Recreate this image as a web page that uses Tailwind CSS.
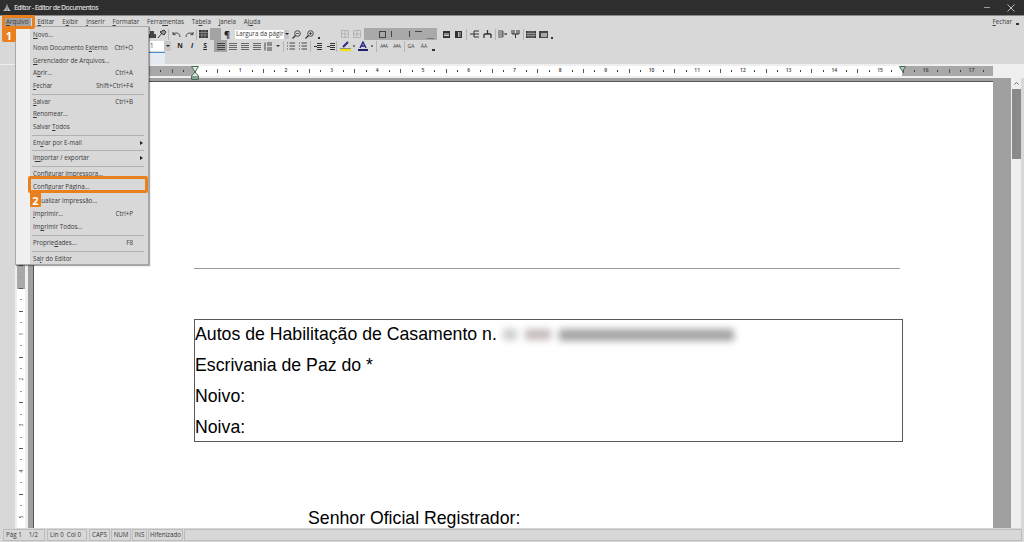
<!DOCTYPE html>
<html lang="pt-BR">
<head>
    <meta charset="UTF-8">
    <title>Editor - Editor de Documentos</title>
    <script src="https://cdn.jsdelivr.net/npm/@tailwindcss/browser@4"></script>
</head>
<body class="w-[1024px] h-[542px] overflow-hidden relative flex flex-col bg-[#d8d8d8] text-[#3a3a3a] font-['Open_Sans',sans-serif] text-[6.2px] leading-none">

    <!-- Title bar -->
    <header class="h-[15px] shrink-0 bg-[#2f2f2f] flex items-center text-[#d8d8d8] pl-[3px] relative">
        <svg class="w-[8px] h-[8px]" viewBox="0 0 8 8"><path d="M4 0 L6 5 L8 7 L0 7 L2 5 Z" fill="#bdbdbd"/><path d="M4 1V7" stroke="#555" stroke-width=".7"/></svg>
        <span class="ml-[3px] font-semibold text-[7px] tracking-[-0.6px]">Editor - Editor de Documentos</span>
        <div class="ml-auto flex items-center">
            <span class="w-[6px] h-px bg-[#9a9a9a] mr-[17px]"></span>
            <svg class="w-[8px] h-[8px] mr-[9px]" viewBox="0 0 8 8"><path d="M.5 .5L7.5 7.5M7.5 .5L.5 7.5" stroke="#cfcfcf" stroke-width=".9"/></svg>
        </div>
    </header>
    <div class="h-px shrink-0 bg-[#8a8a8a]"></div>

    <!-- Menu bar -->
    <nav class="h-[12px] shrink-0 flex items-center pl-[3px] gap-[7.8px]">
        <span class="h-[12px] flex items-center px-[3px] -mr-[1.8px] bg-[#a3a3a3]"><u>A</u>rquivo</span>
        <span><u>E</u>ditar</span>
        <span>E<u>x</u>ibir</span>
        <span><u>I</u>nserir</span>
        <span><u>F</u>ormatar</span>
        <span>Ferra<u>m</u>entas</span>
        <span>Ta<u>b</u>ela</span>
        <span><u>J</u>anela</span>
        <span>Aj<u>u</u>da</span>
        <span class="ml-auto mr-[12px] flex items-center"><u>F</u>echar</span>
        <span class="absolute right-[5px] top-[23px] w-[3px] h-[2px] bg-[#333]"></span>
    </nav>

    <!-- Toolbars -->
    <div class="h-[12px] shrink-0 flex items-center pl-[149px]">
        <svg class="w-[7px] h-[9px]" viewBox="0 0 7 9"><path d="M1 1h4v3h2v4H0V4h1z" fill="#444"/></svg>
        <svg class="w-[10px] h-[10px] ml-[1px]" viewBox="0 0 10 10"><path d="M1 9L5 4M3 3L7 1L9 3L7 6Z" stroke="#333" fill="#999" stroke-width="1"/></svg>
        <span class="w-px h-[11px] bg-[#b4b4b4] ml-[1px]"></span>
        <svg class="w-[9px] h-[7px] ml-[3px]" viewBox="0 0 9 7"><path d="M8 6C8 2 4 1 1 3M1 1V3.6H3.6" fill="none" stroke="#444" stroke-width="1"/></svg>
        <svg class="w-[9px] h-[7px] ml-[4px]" viewBox="0 0 9 7"><path d="M1 6C1 2 5 1 8 3M8 1V3.6H5.4" fill="none" stroke="#444" stroke-width="1"/></svg>
        <span class="w-px h-[11px] bg-[#b4b4b4] ml-[2px]"></span>
        <svg class="w-[9px] h-[8px] ml-[2px]" viewBox="0 0 9 8"><path d="M0 0h9v8H0z" fill="#3c3c3c"/><path d="M0 2.5h9M0 5h9M3 0v8M6 0v8" stroke="#aaa" stroke-width=".6"/></svg>
        <span class="w-[11px] h-[12px] bg-[#a3a3a3] ml-[2px]"></span>
        <span class="w-[12px] text-center text-[9px] font-bold text-[#222]">¶</span>
        <span class="w-[49px] h-[9px] bg-white ml-[2px] flex items-center pl-[1px] overflow-hidden whitespace-nowrap">Largura da págir</span>
        <span class="w-[5px] h-[9px] bg-[#c6c6c6] flex items-center justify-center"><i class="border-x-[2px] border-t-[2px] border-x-transparent border-t-[#222]"></i></span>
        <svg class="w-[9px] h-[9px] ml-[3px]" viewBox="0 0 9 9"><circle cx="5.5" cy="3.5" r="2.8" fill="none" stroke="#444"/><path d="M3.5 5.5L.5 8.5" stroke="#333" stroke-width="1.3"/><path d="M4 3.5h3" stroke="#444" stroke-width=".8"/></svg>
        <svg class="w-[9px] h-[9px] ml-[4px]" viewBox="0 0 9 9"><circle cx="5.5" cy="3.5" r="2.8" fill="none" stroke="#444"/><path d="M3.5 5.5L.5 8.5" stroke="#333" stroke-width="1.3"/><path d="M4 3.5h3M5.5 2v3" stroke="#444" stroke-width=".8"/></svg>
        <span class="w-[2px] h-[2px] bg-[#333] ml-[4px] mt-[7px]"></span>
        <svg class="w-[8px] h-[8px] ml-[21px]" viewBox="0 0 8 8"><path d="M.5.5h7v7h-7zM4 .5v7M.5 4h7" fill="none" stroke="#b4b4b4"/></svg>
        <svg class="w-[8px] h-[8px] ml-[4px]" viewBox="0 0 8 8"><path d="M.5.5h7v7h-7zM4 .5v7M.5 4h7" fill="none" stroke="#b4b4b4"/></svg>
        <!-- Border buttons, active group -->
        <div class="w-[73px] h-[12px] bg-[#a9a9a9] ml-[3px] flex items-center">
            <span class="w-[7px] h-[7px] border border-[#444] ml-[15px]"></span>
            <span class="w-px h-[6px] bg-[#444] ml-[5px]"></span>
            <span class="w-px h-[6px] bg-[#444] ml-[17px]"></span>
            <span class="w-[7px] h-px bg-[#444] ml-[5px] mb-[6px]"></span>
            <span class="w-[7px] h-px bg-[#777] ml-[5px] mt-[8px]"></span>
        </div>
        <svg class="w-[7px] h-[7px] ml-[6px]" viewBox="0 0 7 7"><path d="M0 0h7v7H0z" fill="#333"/><path d="M1 3h5M1 4.6h5" stroke="#ddd"/></svg>
        <svg class="w-[7px] h-[7px] ml-[5px]" viewBox="0 0 7 7"><path d="M0 0h7v7H0z" fill="#333"/><path d="M3.5 1v5M5 1v5" stroke="#ddd" stroke-width=".8"/></svg>
        <span class="w-px h-[11px] bg-[#b4b4b4] ml-[4px]"></span>
        <svg class="w-[9px] h-[8px] ml-[3px]" viewBox="0 0 9 8"><path d="M0 4h4M4 1h5M4 4h5M4 7h5M4 1v6" stroke="#333" fill="none"/></svg>
        <svg class="w-[9px] h-[8px] ml-[4px]" viewBox="0 0 9 8"><path d="M4.5 0v4M1 4h7M1 4v4M8 4v4" stroke="#333" fill="none" stroke-width="1.3"/></svg>
        <span class="w-px h-[11px] bg-[#b4b4b4] ml-[3px]"></span>
        <svg class="w-[9px] h-[8px] ml-[2px]" viewBox="0 0 9 8"><path d="M0 1h5v6H0M0 3h5M0 5h5M6 4h3M8 3v2" stroke="#333" fill="none" stroke-width=".8"/></svg>
        <svg class="w-[9px] h-[8px] ml-[4px]" viewBox="0 0 9 8"><path d="M1 0v4h7V0M3 0v4M6 0v4M4.5 4v4" stroke="#333" fill="none"/></svg>
        <span class="w-px h-[11px] bg-[#b4b4b4] ml-[3px]"></span>
        <svg class="w-[10px] h-[7px] ml-[2px]" viewBox="0 0 10 7"><path d="M0 0h10v7H0z" fill="#333"/><path d="M0 2.5h10M0 4.5h10M2 0v7M4 0v7M6 0v7M8 0v7" stroke="#ccc" stroke-width=".5"/></svg>
        <svg class="w-[9px] h-[7px] ml-[3px]" viewBox="0 0 9 7"><path d="M0 0h9v7H0z" fill="#444"/><path d="M2 2h6v4H2z" fill="#a8a8a8"/></svg>
        <span class="w-[2px] h-[2px] bg-[#333] ml-[3px] mt-[7px]"></span>
    </div>

    <div class="h-[12px] shrink-0 flex items-center pl-[149px]">
        <span class="w-[15px] h-[10px] bg-white flex items-center pl-px">1</span>
        <span class="w-[7px] h-[10px] bg-[#c6c6c6] flex items-center justify-center"><i class="border-x-[2px] border-t-[2px] border-x-transparent border-t-[#222]"></i></span>
        <span class="w-[12px] ml-[3px] text-center font-bold text-[6.8px] text-[#222]">N</span>
        <span class="w-[12px] text-center italic font-bold text-[6.8px] text-[#222]">I</span>
        <span class="w-[12px] ml-[1px] text-center underline font-bold text-[6.8px] text-[#222]">S</span>
        <span class="w-[13px] h-[12px] bg-[#a3a3a3] ml-[3px] flex items-center justify-center"><svg class="w-[8px] h-[7px]" viewBox="0 0 8 7"><path d="M0 .5h8M0 2.5h8M0 4.5h8M0 6.5h8" stroke="#444"/></svg></span>
        <svg class="w-[8px] h-[7px] ml-[2px]" viewBox="0 0 8 7"><path d="M0 .5h8M0 2.5h8M0 4.5h8M0 6.5h8" stroke="#666"/></svg>
        <svg class="w-[8px] h-[7px] ml-[4px]" viewBox="0 0 8 7"><path d="M0 .5h8M0 2.5h8M0 4.5h8M0 6.5h8" stroke="#666"/></svg>
        <svg class="w-[8px] h-[7px] ml-[4px]" viewBox="0 0 8 7"><path d="M0 .5h8M0 2.5h8M0 4.5h8M0 6.5h8" stroke="#666"/></svg>
        <svg class="w-[8px] h-[9px] ml-[3px]" viewBox="0 0 8 9"><path d="M1 .5v8M3 1h5M3 3h5M3 6h5M3 8h5" stroke="#444"/></svg>
        <i class="border-x-[2px] border-t-[2px] border-x-transparent border-t-[#333] ml-[4px]"></i>
        <span class="w-px h-[11px] bg-[#b4b4b4] ml-[3px]"></span>
        <svg class="w-[8px] h-[8px] ml-[3px]" viewBox="0 0 8 8"><path d="M0 1h1M0 4h1M0 7h1M2.5 1H8M2.5 4H8M2.5 7H8" stroke="#444"/></svg>
        <svg class="w-[8px] h-[8px] ml-[4px]" viewBox="0 0 8 8"><path d="M0 1h1M0 4h1M0 7h1M2.5 1H8M2.5 4H8M2.5 7H8" stroke="#444"/></svg>
        <span class="w-px h-[11px] bg-[#b4b4b4] ml-[3px]"></span>
        <svg class="w-[8px] h-[7px] ml-[3px]" viewBox="0 0 8 7"><path d="M3 .5h5M3 2.5h5M3 4.5h5M3 6.5h5M0 3.5h3" stroke="#333"/></svg>
        <svg class="w-[8px] h-[7px] ml-[5px]" viewBox="0 0 8 7"><path d="M3 .5h5M3 2.5h5M3 4.5h5M3 6.5h5M0 3.5h3" stroke="#333"/></svg>
        <span class="w-px h-[11px] bg-[#b4b4b4] ml-[1px]"></span>
        <svg class="w-[11px] h-[10px] ml-[3px]" viewBox="0 0 11 10"><path d="M3 6L8 1" stroke="#2a2a8a" stroke-width="2"/><path d="M0 8h11v2H0z" fill="#f2e200"/><path d="M0 7.5h11" stroke="#444" stroke-width=".5"/></svg>
        <span class="w-[2px] h-[2px] bg-[#777] ml-[2px]"></span>
        <svg class="w-[10px] h-[10px] ml-[3px]" viewBox="0 0 10 10"><path d="M2 7L5 1L8 7M3 5h4" stroke="#1d1d8a" stroke-width="1.3" fill="none"/><path d="M0 8h10v2H0z" fill="#1d1d6a"/></svg>
        <span class="w-[2px] h-[2px] bg-[#777] ml-[3px]"></span>
        <span class="w-px h-[11px] bg-[#b4b4b4] ml-[3px]"></span>
        <span class="w-[10px] ml-[2px] text-[4.5px] text-center whitespace-nowrap">AᴬA</span>
        <span class="w-[10px] ml-[3px] text-[4.5px] text-center whitespace-nowrap">AᴬA</span>
        <span class="w-px h-[11px] bg-[#b4b4b4] ml-[2px]"></span>
        <span class="w-[10px] ml-[1px] text-[5px] text-center">GA</span>
        <span class="w-[10px] ml-[3px] text-[5px] text-center">ÂA</span>
        <span class="w-[3px] h-[2px] bg-[#333] ml-[3px] mt-[7px]"></span>
    </div>

    <!-- Sliver under the toolbars -->
    <div class="h-[12px] shrink-0 flex pl-[149px]">
        <span class="w-[16px] border-t border-t-[#4a90d9] bg-[#e6ebf1]"></span>
    </div>
    <div class="h-px shrink-0 bg-[#efefef]"></div>

    <!-- Horizontal ruler -->
    <div class="h-[13px] shrink-0 flex">
        <div class="w-[15px] shrink-0"></div>
        <div class="flex-1 bg-[#efefef] pt-px pr-[3px]">
            <div id="hruler" class="h-[10px] relative bg-[linear-gradient(to_right,#efefef_0px,#efefef_134px,#a8a8a8_134px,#a8a8a8_180px,#ffffff_180px,#ffffff_887px,#a8a8a8_887px,#a8a8a8_978px,#efefef_978px)]"></div>
        </div>
    </div>

    <!-- Workspace -->
    <div class="flex-1 min-h-0 flex overflow-hidden">
        <div class="w-[15px] shrink-0"></div>
        <div class="w-[13px] shrink-0 bg-[#efefef] px-[2px]">
            <div id="vruler" class="h-full w-[8px] relative bg-[linear-gradient(to_bottom,#a8a8a8_0px,#a8a8a8_211px,#ffffff_211px)]"></div>
        </div>
        <div class="flex-1 min-w-0 bg-[#a0a0a0] flex pt-[3px] pl-[5px]">
            <main class="w-[960px] h-[600px] shrink-0 bg-white border-l border-t border-[#555] font-['Liberation_Sans',sans-serif] text-black pt-[186px] pl-[160px]">
                <div class="w-[706px] h-px bg-[#9a9a9a]"></div>
                <div class="w-[709px] h-[123px] mt-[50px] border border-[#5a5a5a] text-[17.7px] leading-[31px]">
                    <p class="flex items-center -mt-px">Autos de Habilitação de Casamento n.
                        <span class="ml-[6px] flex items-center gap-[8px] blur-[3.5px]">
                            <span class="w-[14px] h-[11px] bg-[#cccccc]"></span>
                            <span class="w-[26px] h-[11px] bg-[#c6bcbc]"></span>
                            <span class="w-[175px] h-[12px] bg-[#a4a4a4]"></span>
                        </span>
                    </p>
                    <p>Escrivania de Paz do *</p>
                    <p>Noivo:</p>
                    <p>Noiva:</p>
                </div>
                <p class="text-[17.7px] mt-[68px] ml-[114px]">Senhor Oficial Registrador:</p>
            </main>
            <div class="w-[18px] shrink-0"></div>
        </div>
        <!-- Scrollbar -->
        <div class="w-[10px] shrink-0 bg-[#efefef] flex flex-col items-center">
            <svg class="w-[9px] h-[9px] shrink-0 mt-px" viewBox="0 0 9 9"><path d="M2.5 5.5L4.5 3.5L6.5 5.5" fill="none" stroke="#666"/></svg>
            <div class="w-[9px] h-[70px] bg-[#8a8a8a] mt-px"></div>
        </div>
        <div class="w-[3px] shrink-0"></div>
    </div>

    <!-- Status bar -->
    <footer class="h-[14px] shrink-0 flex items-center pl-[3px] pr-[2px]">
        <span class="w-[42px] h-[12px] border border-[#bcbcbc] flex items-center pl-[2px] gap-[7px]"><span>Pág 1</span><span>1/2</span></span>
        <span class="w-[40px] h-[12px] ml-[2px] border border-[#bcbcbc] flex items-center pl-[2px] gap-[3px]"><span>Lin 0</span><span>Col 0</span></span>
        <span class="w-[21px] h-[12px] ml-[2px] border border-[#bcbcbc] flex items-center justify-center">CAPS</span>
        <span class="w-[20px] h-[12px] ml-[1px] border border-[#bcbcbc] flex items-center justify-center">NUM</span>
        <span class="w-[15px] h-[12px] ml-px border border-[#bcbcbc] flex items-center justify-center">INS</span>
        <span class="w-[35px] h-[12px] ml-px border border-[#bcbcbc] flex items-center justify-center">Hifenizado</span>
        <span class="flex-1 h-[12px] ml-px border border-[#bcbcbc]"></span>
    </footer>

    <!-- Open "Arquivo" menu -->
    <div class="absolute left-[15px] top-[26px] w-[134px] h-[239px] bg-[linear-gradient(to_right,#f0f0f0_14px,#d8d8d8_14px)] border border-[#a8a8a8] shadow-[1px_1px_1px_rgba(0,0,0,0.35)] pl-[17px] pr-[5px]">
        <div class="h-[13px] mt-[1.5px] flex items-center"><span><u>N</u>ovo...</span></div>
        <div class="h-[13px] flex items-center justify-between pr-[10px]"><span>Novo Documento E<u>x</u>terno</span><span>Ctrl+O</span></div>
        <div class="h-[13px] flex items-center"><span><u>G</u>erenciador de Arquivos...</span></div>
        <div class="h-[12px] flex items-center justify-between pr-[10px]"><span>A<u>b</u>rir...</span><span>Ctrl+A</span></div>
        <div class="h-[13px] flex items-center justify-between pr-[10px]"><span><u>F</u>echar</span><span>Shift+Ctrl+F4</span></div>
        <div class="h-[3.5px] flex items-center -mx-px"><span class="w-full h-px bg-[#b0b0b0]"></span></div>
        <div class="h-[12px] flex items-center justify-between pr-[10px]"><span><u>S</u>alvar</span><span>Ctrl+B</span></div>
        <div class="h-[13px] flex items-center"><span><u>R</u>enomear...</span></div>
        <div class="h-[13px] flex items-center"><span>Salvar <u>T</u>odos</span></div>
        <div class="h-[3px] flex items-center -mx-px"><span class="w-full h-px bg-[#b0b0b0]"></span></div>
        <div class="h-[12px] flex items-center justify-between"><span>En<u>v</u>iar por E-mail</span><i class="border-y-[2px] border-l-[3px] border-y-transparent border-l-[#222]"></i></div>
        <div class="h-[3px] flex items-center -mx-px"><span class="w-full h-px bg-[#b0b0b0]"></span></div>
        <div class="h-[12px] flex items-center justify-between"><span>I<u>m</u>portar / exportar</span><i class="border-y-[2px] border-l-[3px] border-y-transparent border-l-[#222]"></i></div>
        <div class="h-[4px] flex items-center -mx-px"><span class="w-full h-px bg-[#b0b0b0]"></span></div>
        <div class="h-[13px] flex items-center"><span>C<u>o</u>nfigurar Impressora...</span></div>
        <div class="h-[13px] flex items-center"><span>C<u>o</u>nfigurar Página...</span></div>
        <div class="h-[14px] flex items-center"><span>Visualizar Impressão...</span></div>
        <div class="h-[13px] flex items-center justify-between pr-[10px]"><span><u>I</u>mprimir...</span><span>Ctrl+P</span></div>
        <div class="h-[13px] flex items-center"><span>Im<u>p</u>rimir Todos...</span></div>
        <div class="h-[3px] flex items-center -mx-px"><span class="w-full h-px bg-[#b0b0b0]"></span></div>
        <div class="h-[12px] flex items-center justify-between pr-[10px]"><span>Proprie<u>d</u>ades...</span><span>F8</span></div>
        <div class="h-[4px] flex items-center -mx-px"><span class="w-full h-px bg-[#b0b0b0]"></span></div>
        <div class="h-[12px] flex items-center"><span>Sa<u>i</u>r do Editor</span></div>
    </div>

    <!-- Tutorial callouts -->
    <div class="absolute left-[2px] top-[15px] w-[33px] h-[14px] border-[3px] border-[#e8801e] rounded-[2px]"></div>
    <div class="absolute left-[2px] top-[28px] w-[14px] h-[14px] bg-[#e8801e] rounded-b-[2px] text-white font-bold text-[11px] flex items-center justify-center">1</div>
    <div class="absolute left-[28px] top-[176px] w-[120px] h-[17px] border-[3px] border-[#e8801e] rounded-[2px]"></div>
    <div class="absolute left-[30px] top-[193px] w-[11px] h-[14px] bg-[#e8801e] rounded-b-[1px] text-white font-bold text-[11px] flex items-center justify-center">2</div>

    <!-- Indent markers on the ruler -->
    <svg class="absolute left-[191px] top-[66px] w-[8px] h-[14px]" viewBox="0 0 8 14"><path d="M.5 .5h7L4 6L7.5 10v3.5h-7V10L4 6z" fill="#dfe9e2" stroke="#4a6a55"/><path d="M1 10h6v3H1z" fill="#7fa58c"/></svg>
    <svg class="absolute left-[899px] top-[66px] w-[7px] h-[6px]" viewBox="0 0 7 6"><path d="M.5 .5h6L3.5 5.5z" fill="#a9d3ba" stroke="#4a6a55"/></svg>

<script>
    // Ruler marks: one unit is 45.7px, with a mark every quarter
    const unit = 45.7;

    const hruler = document.getElementById('hruler');
    const hOrigin = 179.5;
    for (let i = -3; i <= 70; i++) {
        const x = hOrigin + i * unit / 4;
        if (x < 134 || x > 975) continue;
        const mark = document.createElement('span');
        mark.style.left = x + 'px';
        if (i % 4 === 0 && i > 0) {
            mark.className = 'absolute top-[2px] -translate-x-1/2 text-[5px] text-[#333] font-semibold';
            mark.textContent = i / 4;
        } else if (i % 4 === 0 || i % 2 === 0) {
            mark.className = 'absolute top-[3px] w-px h-[4px] bg-[#555]';
        } else {
            mark.className = 'absolute top-[4px] w-px h-[2px] bg-[#444]';
        }
        hruler.appendChild(mark);
    }

    const vruler = document.getElementById('vruler');
    const vOrigin = 210;
    for (let i = -3; i <= 21; i++) {
        const y = vOrigin + i * unit / 4;
        const mark = document.createElement('span');
        mark.style.top = y + 'px';
        if (i % 4 === 0 && i > 0) {
            mark.className = 'absolute left-[1px] w-[6px] -translate-y-1/2 -rotate-90 text-center text-[5px] text-[#333]';
            mark.textContent = i / 4;
        } else if (i % 2 === 0) {
            mark.className = 'absolute left-[2px] w-[4px] h-px bg-[#555]';
        } else {
            mark.className = 'absolute left-[3px] w-[2px] h-px bg-[#999]';
        }
        vruler.appendChild(mark);
    }
</script>
</body>
</html>
